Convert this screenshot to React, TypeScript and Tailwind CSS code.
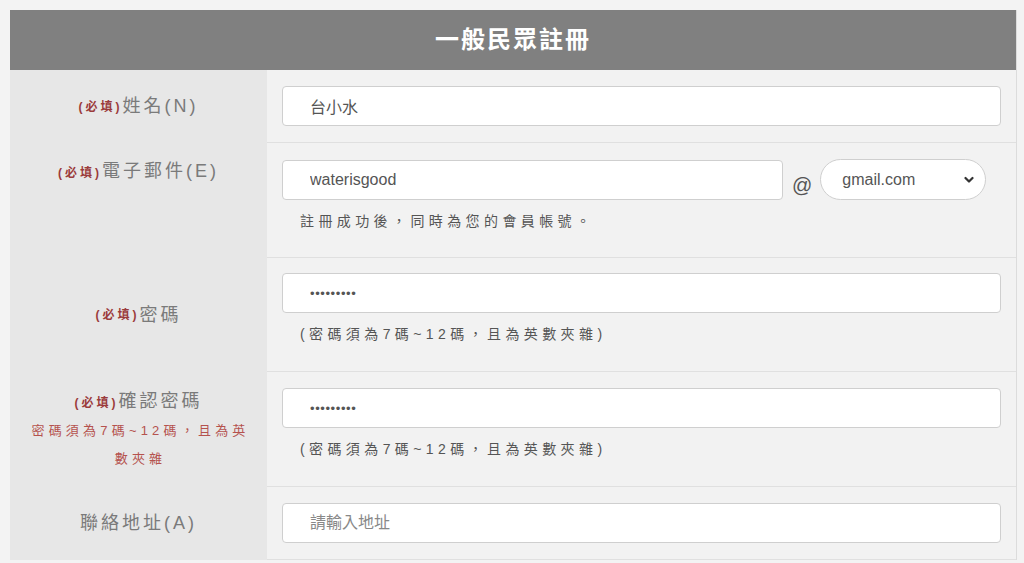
import React from 'react';

const font = { fontFamily: '"Liberation Sans", "Noto Sans CJK TC", sans-serif' };

function Required() {
  return <span className="text-[12px] font-bold text-[#9b3b3b]">(必填)</span>;
}

function Hint({ children }: { children: React.ReactNode }) {
  return (
    <p className="mt-[11px] pl-[18px] text-[14px] leading-[20px] tracking-[4.4px] text-[#555]">
      {children}
    </p>
  );
}

const boxCls =
  'block h-[40px] rounded-[4px] border border-[#cfcfcf] bg-white pl-[27px] text-[#555] outline-none placeholder:text-[#888]';
const inputCls = `${boxCls} text-[16px]`;
const pwCls = `${boxCls} w-full text-[13px] tracking-[0.6px]`;

export default function App() {
  return (
    <div className="min-h-screen bg-[#f3f3f3] px-[10px] pt-[10px]" style={font}>
      <div className="w-[1007px] border-r border-[#dcdcdc]">
        {/* 標題 */}
        <div className="flex h-[60px] items-center justify-center bg-[#808080]">
          <h1 className="text-[24px] font-bold tracking-[2px] text-white">一般民眾註冊</h1>
        </div>

        {/* 姓名 */}
        <div className="flex">
          <div className="flex w-[257px] items-center justify-center bg-[#e7e7e7] tracking-[3px]">
            <Required />
            <span className="text-[18px] text-[#7a7a7a]">姓名(N)</span>
          </div>
          <div className="flex-1 border-b border-[#e0e0e0] bg-[#f2f2f2] px-[15px] py-[16px]">
            <input className={`${inputCls} w-full`} defaultValue="台小水" />
          </div>
        </div>

        {/* 電子郵件 */}
        <div className="flex">
          <div className="flex w-[257px] justify-center bg-[#e7e7e7] pt-[16px] tracking-[3px]">
            <div className="h-[24px] leading-[24px]">
              <Required />
              <span className="text-[18px] text-[#7a7a7a]">電子郵件(E)</span>
            </div>
          </div>
          <div className="flex-1 border-b border-[#e0e0e0] bg-[#f2f2f2] px-[15px] pt-[16px] pb-[26px]">
            <div className="flex items-center">
              <input className={`${inputCls} w-[501px]`} defaultValue="waterisgood" />
              <span className="ml-[9px] mr-[8px] pt-[10px] text-[20px] text-[#555]">@</span>
              <div className="relative w-[166px]">
                <select
                  className="block h-[41px] w-full appearance-none rounded-full border border-[#cfcfcf] bg-white pl-[21px] text-[16px] text-[#555] outline-none"
                  defaultValue="gmail.com"
                >
                  <option>gmail.com</option>
                  <option>yahoo.com.tw</option>
                  <option>hotmail.com</option>
                </select>
                <svg
                  className="pointer-events-none absolute right-[12px] top-[17px] h-[8px] w-[10px]"
                  viewBox="0 0 10 8"
                  fill="none"
                  stroke="#333"
                  strokeWidth="2.2"
                  strokeLinecap="round"
                  strokeLinejoin="round"
                >
                  <path d="M1.5 2 L5 5.5 L8.5 2" />
                </svg>
              </div>
            </div>
            <Hint>註冊成功後，同時為您的會員帳號。</Hint>
          </div>
        </div>

        {/* 密碼 */}
        <div className="flex">
          <div className="flex w-[257px] items-center justify-center bg-[#e7e7e7] tracking-[3px]">
            <Required />
            <span className="text-[18px] text-[#7a7a7a]">密碼</span>
          </div>
          <div className="flex-1 border-b border-[#e0e0e0] bg-[#f2f2f2] px-[15px] pt-[15px] pb-[27px]">
            <input type="password" className={pwCls} defaultValue="123456789" />
            <Hint>(密碼須為7碼~12碼，且為英數夾雜)</Hint>
          </div>
        </div>

        {/* 確認密碼 */}
        <div className="flex">
          <div className="flex w-[257px] flex-col items-center justify-center bg-[#e7e7e7] pt-[1px] text-center">
            <div className="h-[30px] leading-[28px] tracking-[3px]">
              <Required />
              <span className="text-[18px] text-[#7a7a7a]">確認密碼</span>
            </div>
            <p className="w-[230px] pl-[4px] text-[13px] leading-[28px] tracking-[4.2px] text-[#b5524e]">
              密碼須為7碼~12碼，且為英數夾雜
            </p>
          </div>
          <div className="flex-1 border-b border-[#e0e0e0] bg-[#f2f2f2] px-[15px] pt-[16px] pb-[27px]">
            <input type="password" className={pwCls} defaultValue="123456789" />
            <Hint>(密碼須為7碼~12碼，且為英數夾雜)</Hint>
          </div>
        </div>

        {/* 聯絡地址 */}
        <div className="flex">
          <div className="flex w-[257px] items-center justify-center bg-[#e7e7e7] tracking-[3px]">
            <span className="text-[18px] text-[#7a7a7a]">聯絡地址(A)</span>
          </div>
          <div className="flex-1 border-b border-[#e0e0e0] bg-[#f2f2f2] px-[15px] py-[16px]">
            <input className={`${inputCls} w-full`} placeholder="請輸入地址" />
          </div>
        </div>
      </div>
    </div>
  );
}
